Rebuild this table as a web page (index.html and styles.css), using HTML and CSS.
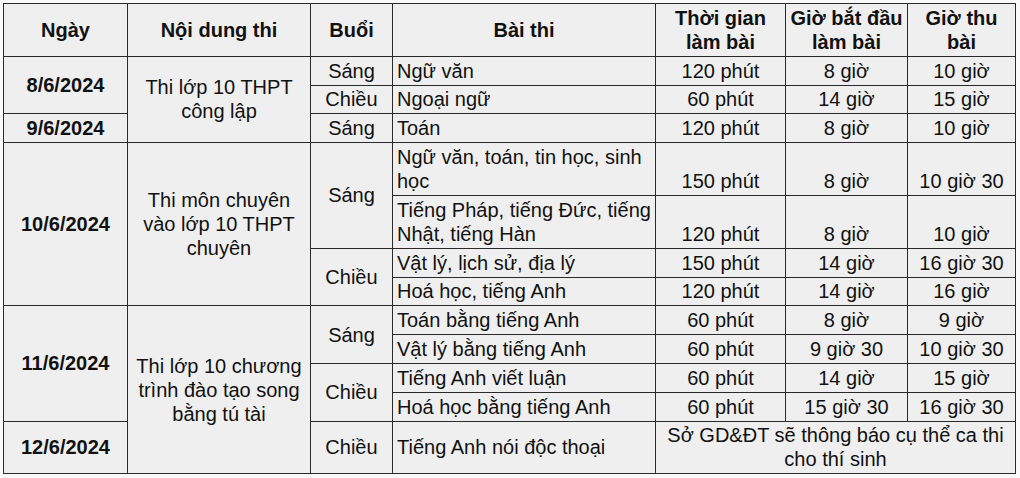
FILE: index.html
```html
<!DOCTYPE html>
<html lang="vi">
<head>
<meta charset="utf-8">
<title>Lịch thi</title>
<link rel="stylesheet" href="styles.css">
</head>
<body>
<div class="sheet">
<table class="schedule">
  <colgroup>
    <col class="c-date"><col class="c-content"><col class="c-session"><col class="c-subject"><col class="c-dur"><col class="c-start"><col class="c-end">
  </colgroup>
  <thead>
    <tr class="r2">
      <th>Ngày</th>
      <th>Nội dung thi</th>
      <th>Buổi</th>
      <th>Bài thi</th>
      <th>Thời gian<br>làm bài</th>
      <th>Giờ bắt đầu<br>làm bài</th>
      <th>Giờ thu<br>bài</th>
    </tr>
  </thead>
  <tbody>
    <tr class="r1">
      <td class="date" rowspan="2">8/6/2024</td>
      <td class="mid" rowspan="3">Thi lớp 10 THPT<br>công lập</td>
      <td class="mid">Sáng</td>
      <td class="subj">Ngữ văn</td>
      <td>120 phút</td><td>8 giờ</td><td>10 giờ</td>
    </tr>
    <tr class="r1">
      <td class="mid">Chiều</td>
      <td class="subj">Ngoại ngữ</td>
      <td>60 phút</td><td>14 giờ</td><td>15 giờ</td>
    </tr>
    <tr class="r1">
      <td class="date">9/6/2024</td>
      <td class="mid">Sáng</td>
      <td class="subj">Toán</td>
      <td>120 phút</td><td>8 giờ</td><td>10 giờ</td>
    </tr>
    <tr class="r2">
      <td class="date" rowspan="4">10/6/2024</td>
      <td class="mid" rowspan="4">Thi môn chuyên<br>vào lớp 10 THPT<br>chuyên</td>
      <td class="mid" rowspan="2">Sáng</td>
      <td class="subj">Ngữ văn, toán, tin học, sinh<br>học</td>
      <td>150 phút</td><td>8 giờ</td><td>10 giờ 30</td>
    </tr>
    <tr class="r2">
      <td class="subj">Tiếng Pháp, tiếng Đức, tiếng<br>Nhật, tiếng Hàn</td>
      <td>120 phút</td><td>8 giờ</td><td>10 giờ</td>
    </tr>
    <tr class="r1">
      <td class="mid" rowspan="2">Chiều</td>
      <td class="subj">Vật lý, lịch sử, địa lý</td>
      <td>150 phút</td><td>14 giờ</td><td>16 giờ 30</td>
    </tr>
    <tr class="r1">
      <td class="subj">Hoá học, tiếng Anh</td>
      <td>120 phút</td><td>14 giờ</td><td>16 giờ</td>
    </tr>
    <tr class="r1">
      <td class="date" rowspan="4">11/6/2024</td>
      <td class="mid" rowspan="5">Thi lớp 10 chương<br>trình đào tạo song<br>bằng tú tài</td>
      <td class="mid" rowspan="2">Sáng</td>
      <td class="subj">Toán bằng tiếng Anh</td>
      <td>60 phút</td><td>8 giờ</td><td>9 giờ</td>
    </tr>
    <tr class="r1">
      <td class="subj">Vật lý bằng tiếng Anh</td>
      <td>60 phút</td><td>9 giờ 30</td><td>10 giờ 30</td>
    </tr>
    <tr class="r1">
      <td class="mid" rowspan="2">Chiều</td>
      <td class="subj">Tiếng Anh viết luận</td>
      <td>60 phút</td><td>14 giờ</td><td>15 giờ</td>
    </tr>
    <tr class="r1">
      <td class="subj">Hoá học bằng tiếng Anh</td>
      <td>60 phút</td><td>15 giờ 30</td><td>16 giờ 30</td>
    </tr>
    <tr class="r2">
      <td class="date">12/6/2024</td>
      <td class="mid">Chiều</td>
      <td class="subj mid">Tiếng Anh nói độc thoại</td>
      <td class="mid" colspan="3">Sở GD&amp;ĐT sẽ thông báo cụ thể ca thi<br>cho thí sinh</td>
    </tr>
  </tbody>
</table>
</div>
</body>
</html>
```
FILE: styles.css
```css
html, body {
  margin: 0;
  padding: 0;
  background: #f9f9f9;
}

.sheet {
  padding: 3px 0 0 3px;
  font-family: "Liberation Sans", Arial, sans-serif;
  font-size: 20px;
  line-height: 24px;
  color: #111;
}

.schedule {
  border-collapse: collapse;
  table-layout: fixed;
  width: 1012px;
  background: #efefef;
}

.c-date { width: 124px; }
.c-content { width: 183px; }
.c-session { width: 82px; }
.c-subject { width: 263px; }
.c-dur { width: 130px; }
.c-start { width: 122px; }
.c-end { width: 108px; }

.schedule th,
.schedule td {
  border: 1px solid #2a2a2a;
  padding: 0 2px 2px 2px;
  text-align: center;
  vertical-align: bottom;
  white-space: nowrap;
  overflow: hidden;
}

.schedule th {
  font-weight: bold;
  vertical-align: middle;
  padding-bottom: 0;
}

.schedule tr.r1 { height: 28.8px; }
.schedule tr.r2 { height: 52.8px; }

.schedule td.mid,
.schedule td.date {
  vertical-align: middle;
  padding-bottom: 0;
}

.schedule td.date {
  font-weight: bold;
}

.schedule td.subj {
  text-align: left;
  padding-left: 4px;
}
```
